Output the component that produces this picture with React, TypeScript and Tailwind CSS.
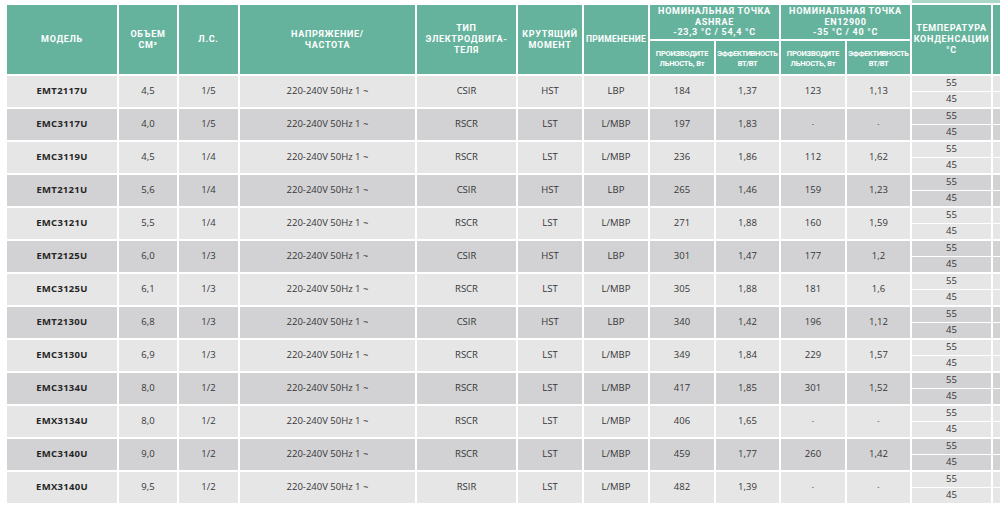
import React from "react";

const COLS =
  "grid grid-cols-[110px_58px_59px_175px_99px_64px_64px_64px_63px_64px_63px_79px_20px] gap-[2px]";

type Row = [string, string, string, string, string, string, string, string, string, string];

const rows: Row[] = [
  ["EMT2117U", "4,5", "1/5", "CSIR", "HST", "LBP", "184", "1,37", "123", "1,13"],
  ["EMC3117U", "4,0", "1/5", "RSCR", "LST", "L/MBP", "197", "1,83", "-", "-"],
  ["EMC3119U", "4,5", "1/4", "RSCR", "LST", "L/MBP", "236", "1,86", "112", "1,62"],
  ["EMT2121U", "5,6", "1/4", "CSIR", "HST", "LBP", "265", "1,46", "159", "1,23"],
  ["EMC3121U", "5,5", "1/4", "RSCR", "LST", "L/MBP", "271", "1,88", "160", "1,59"],
  ["EMT2125U", "6,0", "1/3", "CSIR", "HST", "LBP", "301", "1,47", "177", "1,2"],
  ["EMC3125U", "6,1", "1/3", "RSCR", "LST", "L/MBP", "305", "1,88", "181", "1,6"],
  ["EMT2130U", "6,8", "1/3", "CSIR", "HST", "LBP", "340", "1,42", "196", "1,12"],
  ["EMC3130U", "6,9", "1/3", "RSCR", "LST", "L/MBP", "349", "1,84", "229", "1,57"],
  ["EMC3134U", "8,0", "1/2", "RSCR", "LST", "L/MBP", "417", "1,85", "301", "1,52"],
  ["EMX3134U", "8,0", "1/2", "RSCR", "LST", "L/MBP", "406", "1,65", "-", "-"],
  ["EMC3140U", "9,0", "1/2", "RSCR", "LST", "L/MBP", "459", "1,77", "260", "1,42"],
  ["EMX3140U", "9,5", "1/2", "RSIR", "LST", "L/MBP", "482", "1,39", "-", "-"],
];

const H =
  "bg-[#66b39d] text-white font-bold uppercase flex items-center justify-center text-center font-['Roboto',sans-serif]";

function Cell({ children, bg, bold }: { children?: React.ReactNode; bg: string; bold?: boolean }) {
  return (
    <div
      className={`h-[31px] flex items-center justify-center ${bg} ${
        bold ? "font-bold text-[9.5px] text-[#262626] tracking-[0.3px]" : "text-[9.5px] text-[#363636]"
      }`}
    >
      {children}
    </div>
  );
}

function Dash() {
  return <span className="text-[7px]">-</span>;
}

export default function App() {
  return (
    <div
      className="w-[1000px] h-[510px] overflow-hidden bg-white"
      style={{ fontFamily: '"Open Sans", "Noto Sans", sans-serif' }}
    >
      <div className="h-[3px] ml-[912px] bg-[#a9d6c6]" />
      <div className="pl-[7px] pt-[2px]">
        {/* header */}
        <div className={`${COLS} grid-rows-[34px_33px]`}>
          <div className={`${H} row-span-2 text-[9px] tracking-[0.7px]`}>Модель</div>
          <div className={`${H} row-span-2 text-[9px] tracking-[0.7px] leading-[10.5px]`}>
            Объем
            <br />
            см³
          </div>
          <div className={`${H} row-span-2 text-[9px] tracking-[0.7px]`}>л.с.</div>
          <div className={`${H} row-span-2 text-[9px] tracking-[0.7px] leading-[10.5px]`}>
            Напряжение/
            <br />
            частота
          </div>
          <div className={`${H} row-span-2 text-[9px] tracking-[0.7px] leading-[11px]`}>
            Тип
            <br />
            электродвига-
            <br />
            теля
          </div>
          <div className={`${H} row-span-2 text-[9px] tracking-[0.7px] leading-[10.5px]`}>
            Крутящий
            <br />
            момент
          </div>
          <div className={`${H} row-span-2 text-[8.5px] tracking-[0.3px]`}>Применение</div>
          <div className={`${H} col-span-2 items-start pt-[1px] text-[9px] tracking-[0.7px] leading-[10.5px]`}>
            <div>
              Номинальная точка
              <br />
              ASHRAE
              <br />
              -23,3 °C / 54,4 °C
            </div>
          </div>
          <div className={`${H} col-span-2 items-start pt-[1px] text-[9px] tracking-[0.7px] leading-[10.5px]`}>
            <div>
              Номинальная точка
              <br />
              EN12900
              <br />
              -35 °C / 40 °C
            </div>
          </div>
          <div className={`${H} row-span-2 text-[9px] tracking-[0.7px] leading-[11px]`}>
            Температура
            <br />
            конденсации
            <br />
            °C
          </div>
          <div className={`${H} row-span-2`} />
          {[0, 1].map((i) => (
            <React.Fragment key={i}>
              <div className={`${H} pt-[2px] text-[7.5px] leading-[10px] tracking-[-0.2px]`}>
                <div>
                  ПРОИЗВОДИТЕ
                  <br />
                  ЛЬНОСТЬ, <span className="normal-case">Вт</span>
                </div>
              </div>
              <div className={`${H} pt-[2px] text-[7.5px] leading-[10px] tracking-[-0.4px]`}>
                <div>
                  ЭФФЕКТИВНОСТЬ
                  <br />
                  ВТ/ВТ
                </div>
              </div>
            </React.Fragment>
          ))}
        </div>

        {/* body */}
        <div className="mt-[2px] flex flex-col gap-[2px]">
          {rows.map((r, idx) => {
            const bg = idx % 2 === 0 ? "bg-[#e6e6e7]" : "bg-[#d2d2d4]";
            return (
              <div key={idx} className={COLS}>
                <Cell bg={bg} bold>
                  {r[0]}
                </Cell>
                <Cell bg={bg}>{r[1]}</Cell>
                <Cell bg={bg}>{r[2]}</Cell>
                <Cell bg={bg}>220-240V 50Hz 1 ~</Cell>
                <Cell bg={bg}>{r[3]}</Cell>
                <Cell bg={bg}>{r[4]}</Cell>
                <Cell bg={bg}>{r[5]}</Cell>
                <Cell bg={bg}>{r[6]}</Cell>
                <Cell bg={bg}>{r[7]}</Cell>
                <Cell bg={bg}>{r[8] === "-" ? <Dash /> : r[8]}</Cell>
                <Cell bg={bg}>{r[9] === "-" ? <Dash /> : r[9]}</Cell>
                <div className="h-[31px] flex flex-col gap-[1px]">
                  <div className={`h-[15px] flex items-center justify-center text-[9.5px] text-[#363636] ${bg}`}>55</div>
                  <div className={`h-[15px] flex items-center justify-center text-[9.5px] text-[#363636] ${bg}`}>45</div>
                </div>
                <div className="h-[31px] flex flex-col gap-[1px]">
                  <div className={`h-[15px] ${bg}`} />
                  <div className={`h-[15px] ${bg}`} />
                </div>
              </div>
            );
          })}
        </div>
      </div>
    </div>
  );
}
